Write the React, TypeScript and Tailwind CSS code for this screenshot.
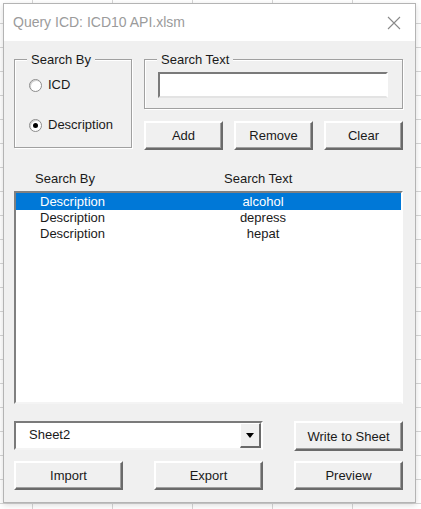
import React from "react";

const font = "font-['Liberation_Sans',Arial,sans-serif]";

const Btn = ({ label, w }: { label: string; w: string }) => (
  <button
    className={`${w} h-[29px] bg-[#f0f0f0] border-2 border-t-white border-l-white border-r-[#6a6a6a] border-b-[#6a6a6a] shadow-[inset_-1px_-1px_0_#a0a0a0] text-[13px] text-[#1a1a1a] leading-none`}
  >
    {label}
  </button>
);

const Radio = ({ label, checked }: { label: string; checked?: boolean }) => (
  <div className="flex items-center h-[14px] gap-[6px]">
    <div className="w-[13px] h-[13px] rounded-full bg-white border border-[#8c8c8c] shadow-[inset_1px_1px_0_#d0d0d0] flex items-center justify-center">
      {checked && <div className="w-[5px] h-[5px] rounded-full bg-black" />}
    </div>
    <span className="text-[13px] text-[#1a1a1a]">{label}</span>
  </div>
);

const Frame = ({
  title,
  className,
  children,
}: {
  title: string;
  className: string;
  children: React.ReactNode;
}) => (
  <div
    className={`relative border border-[#a0a0a0] shadow-[1px_1px_0_#fff,inset_1px_1px_0_#fff] ${className}`}
  >
    <span className="absolute left-[12px] top-[-8px] px-[4px] bg-[#f0f0f0] text-[13px] leading-[16px] text-[#1a1a1a]">
      {title}
    </span>
    {children}
  </div>
);

const rows = [
  { by: "Description", text: "alcohol", sel: true },
  { by: "Description", text: "depress" },
  { by: "Description", text: "hepat" },
];

export default function App() {
  return (
    <div
      className={`${font} w-[421px] h-[509px] bg-white pt-[3px] pl-[3px] overflow-hidden [background-image:linear-gradient(to_right,#d6d6d6_1px,transparent_1px),linear-gradient(to_bottom,#d6d6d6_1px,transparent_1px)] [background-size:80px_24px] [background-position:32px_23px]`}
    >
      <div className="w-[413px] h-[500px] border border-[#b4b4b4] bg-[#f0f0f0] shadow-[0_2px_6px_rgba(0,0,0,0.15)] flex flex-col">
        {/* title bar */}
        <div className="h-[37px] bg-white flex items-center justify-between pl-[9px] pr-[13px]">
          <span className="text-[14px] text-[#9b9b9b]">Query ICD: ICD10 API.xlsm</span>
          <svg width="14" height="14" viewBox="0 0 14 14" className="mr-[1px]">
            <path d="M1 1L13 13M13 1L1 13" stroke="#8a8a8a" strokeWidth="1.1" />
          </svg>
        </div>

        <div className="flex-1 flex flex-col pl-[10px] pt-[18px]">
          <div className="flex gap-[12px] items-start h-[91px]">
            <Frame title="Search By" className="w-[118px] h-[89px] flex flex-col pl-[14px] pt-[18px] gap-[26px]">
              <Radio label="ICD" />
              <Radio label="Description" checked />
            </Frame>

            <div className="w-[259px] flex flex-col gap-[12px]">
              <Frame title="Search Text" className="h-[50px] pl-[13px] pt-[12px]">
                <div className="w-[230px] h-[26px] bg-white border-2 border-t-[#7a7a7a] border-l-[#7a7a7a] border-b-[#e3e3e3] border-r-white" />
              </Frame>
              <div className="flex gap-[11px]">
                <Btn label="Add" w="w-[79px]" />
                <Btn label="Remove" w="w-[79px]" />
                <Btn label="Clear" w="w-[79px]" />
              </div>
            </div>
          </div>

          <div className="mt-[21px] h-[16px] flex text-[13px] leading-[16px] text-[#1a1a1a]">
            <span className="pl-[21px] w-[210px]">Search By</span>
            <span>Search Text</span>
          </div>

          <div className="mt-[4px] w-[389px] h-[213px] bg-white border-2 border-t-[#808080] border-l-[#808080] border-b-[#f4f4f4] border-r-white">
            {rows.map((r, i) => (
              <div
                key={r.text}
                className={`${i === 0 ? "h-[17px] pt-[1px]" : "h-[16px]"} flex items-center text-[13px] ${
                  r.sel ? "bg-[#0078d7] text-white" : "text-[#1a1a1a]"
                }`}
              >
                <span className="pl-[24px] w-[147px]">{r.by}</span>
                <span className="w-[200px] text-center">{r.text}</span>
              </div>
            ))}
          </div>

          <div className="mt-[17px] flex items-start h-[30px]">
            <div className="w-[249px] h-[29px] bg-white border-2 border-t-[#7a7a7a] border-l-[#7a7a7a] border-b-[#f4f4f4] border-r-white flex items-start">
              <span className="flex-1 pl-[13px] pt-[2px] text-[13px] text-[#1a1a1a]">Sheet2</span>
              <div className="w-[21px] h-[25px] bg-[#f0f0f0] border-t border-l border-b-2 border-r-2 border-t-white border-l-white border-b-[#6a6a6a] border-r-[#6a6a6a] flex items-center justify-center">
                <svg width="8" height="5" viewBox="0 0 8 5">
                  <path d="M0 0H8L4 5Z" fill="#000" />
                </svg>
              </div>
            </div>
            <div className="ml-[31px]">
              <button className="w-[109px] h-[30px] bg-[#f0f0f0] border-2 border-t-white border-l-white border-r-[#6a6a6a] border-b-[#6a6a6a] shadow-[inset_-1px_-1px_0_#a0a0a0] text-[13px] text-[#1a1a1a] leading-none">
                Write to Sheet
              </button>
            </div>
          </div>

          <div className="mt-[10px] flex gap-[31px]">
            <Btn label="Import" w="w-[109px]" />
            <Btn label="Export" w="w-[109px]" />
            <Btn label="Preview" w="w-[109px]" />
          </div>
        </div>
      </div>
    </div>
  );
}
